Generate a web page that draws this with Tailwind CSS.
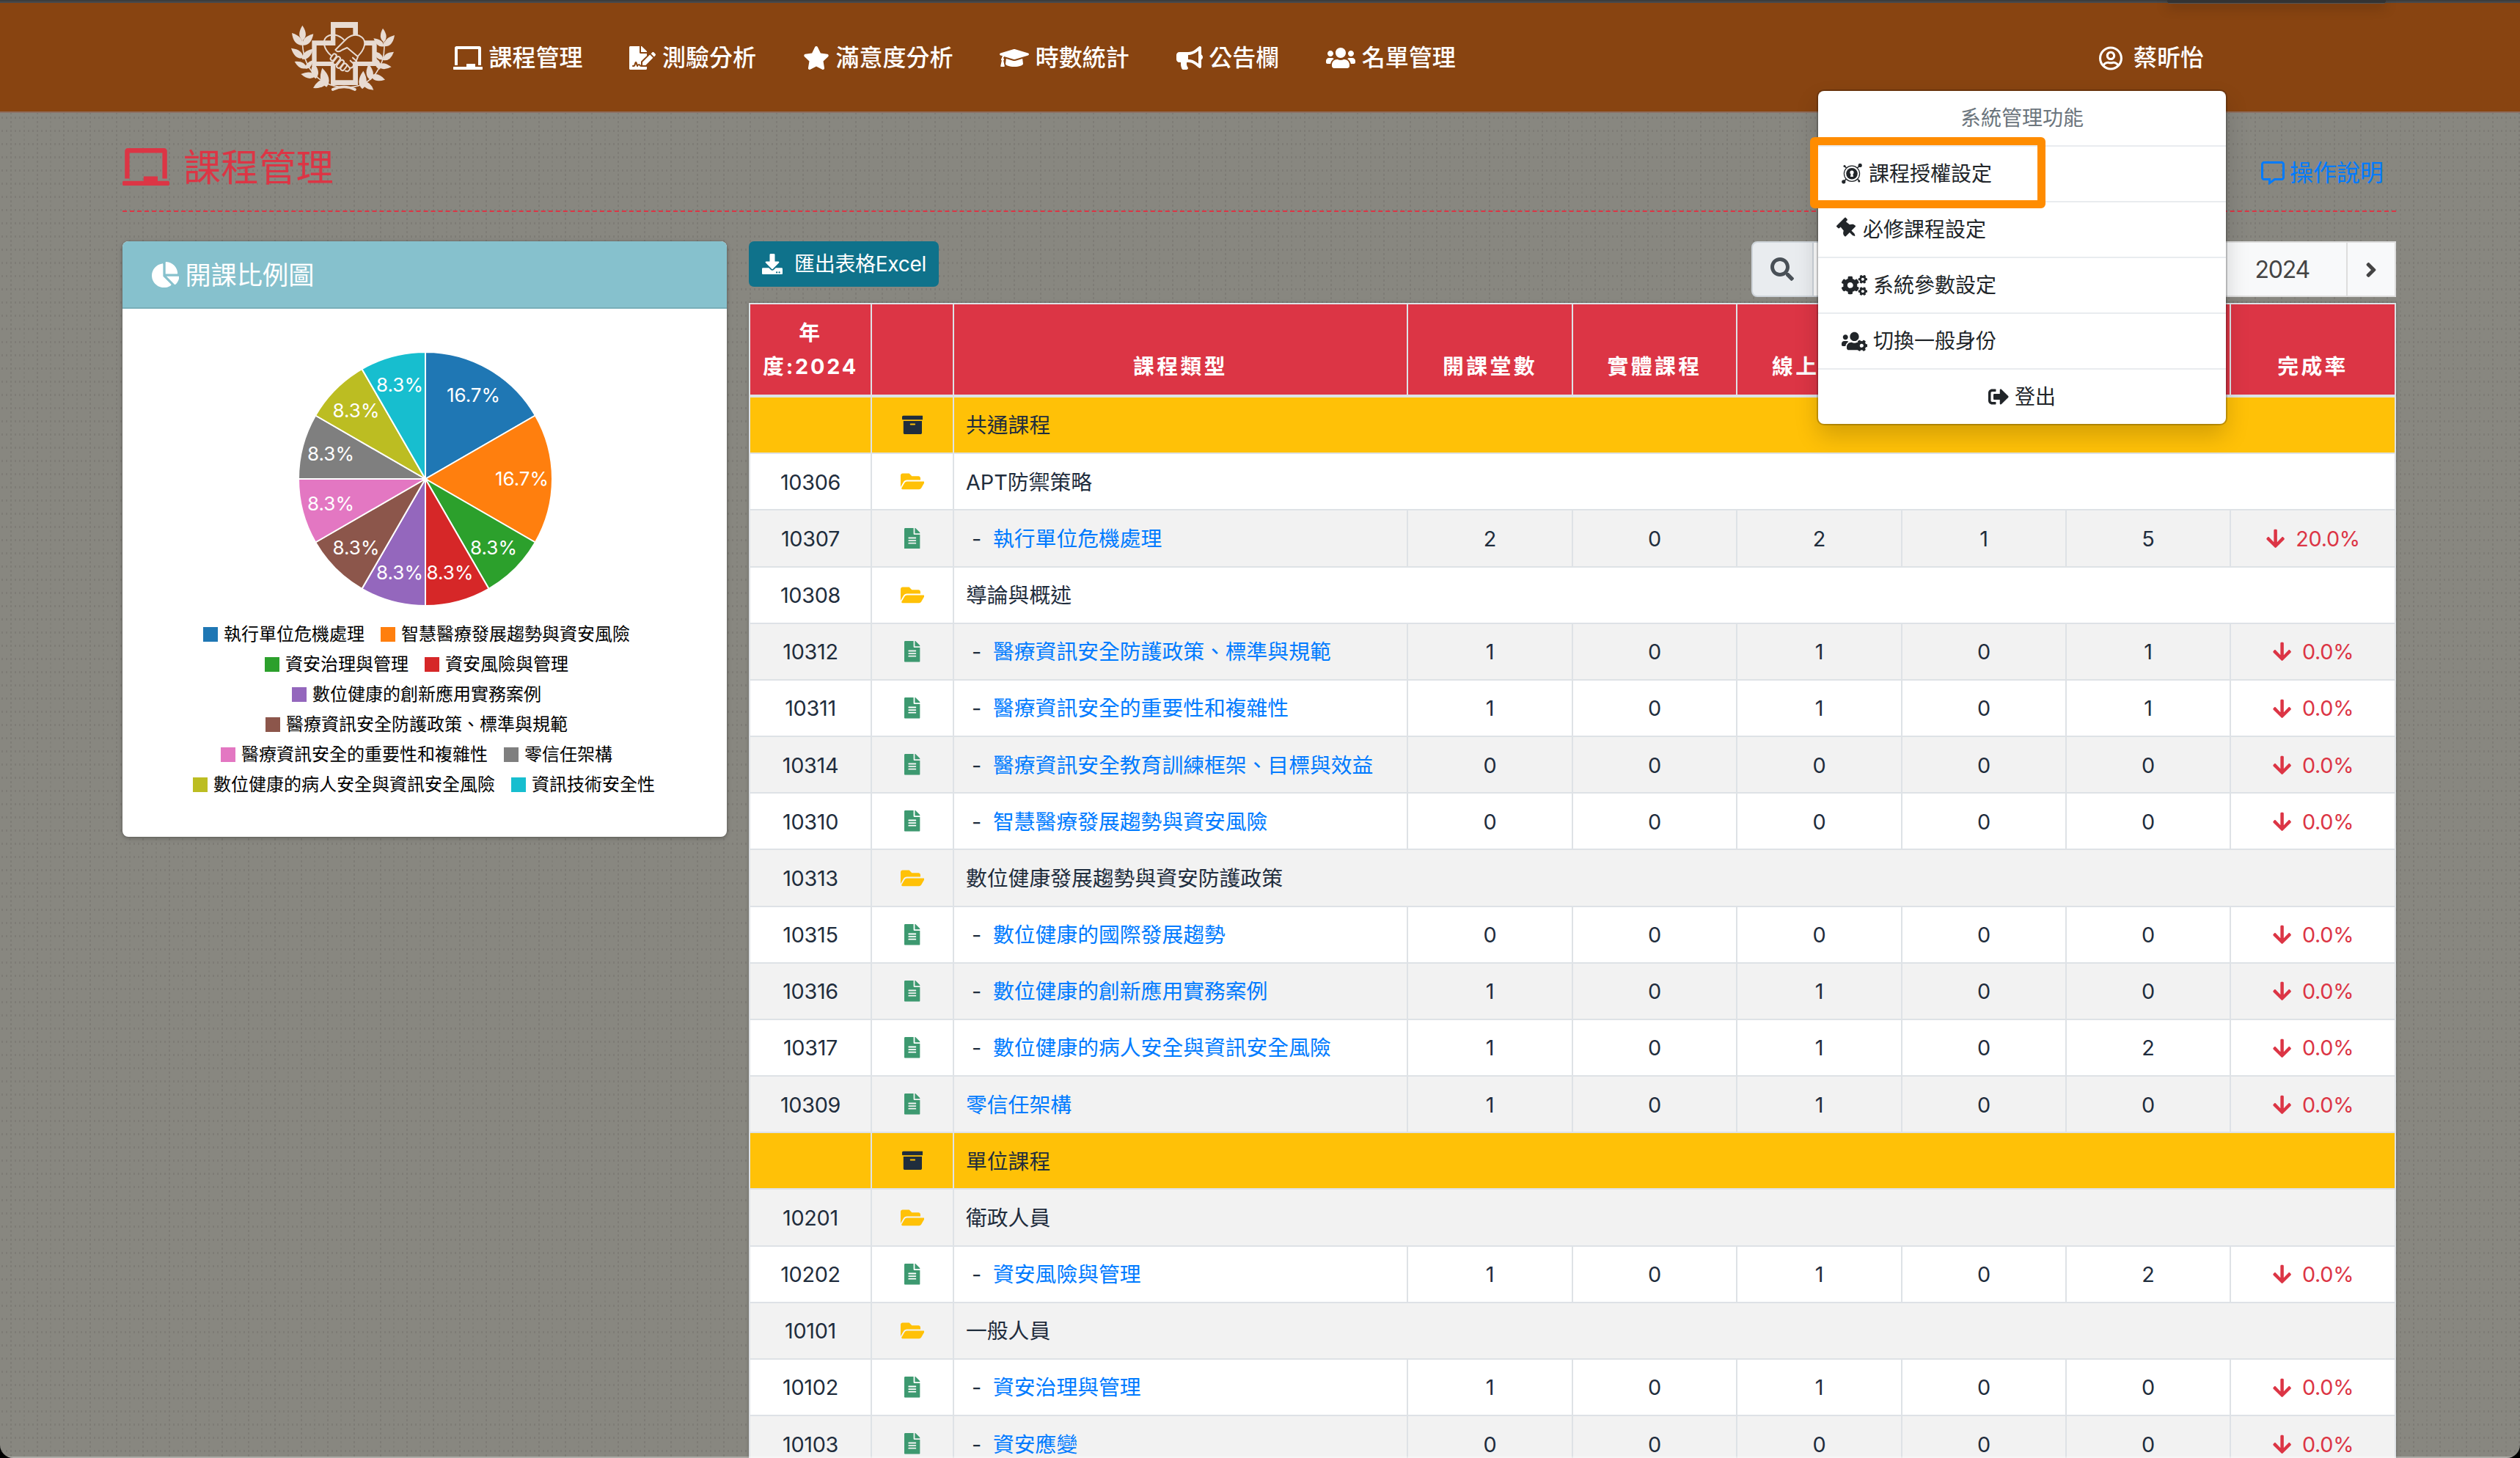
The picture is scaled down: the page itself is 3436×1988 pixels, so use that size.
<!DOCTYPE html>
<html lang="zh-Hant">
<head>
<meta charset="utf-8">
<title>課程管理</title>
<script src="https://cdn.jsdelivr.net/npm/@tailwindcss/browser@4"></script>
</head>
<body class="bg-black">
<svg class="hidden">
  <defs>
    <symbol id="chalkboard" viewBox="0 0 640 512"><path d="M96 64h448v352h64V40c0-22.06-17.94-40-40-40H72C49.94 0 32 17.94 32 40v376h64V64zm528 384H480v-64H288v64H16c-8.84 0-16 7.16-16 16v32c0 8.84 7.16 16 16 16h608c8.84 0 16-7.16 16-16v-32c0-8.84-7.16-16-16-16z"/></symbol>
    <symbol id="signature" viewBox="0 0 576 512"><path d="M218.17 424.14c-2.95-5.92-8.09-6.52-10.17-6.52s-7.22.59-10.02 6.19l-7.67 15.34c-6.37 12.78-25.03 11.37-29.48-2.09L144 386.59l-10.61 31.88c-5.89 17.66-22.38 29.53-41 29.53H80c-8.84 0-16-7.16-16-16s7.16-16 16-16h12.39c4.83 0 9.11-3.08 10.64-7.66l18.19-54.64c3.3-9.81 12.44-16.41 22.78-16.41s19.48 6.59 22.77 16.41l13.88 41.64c19.75-16.19 54.06-9.7 66 14.16 1.89 3.78 5.49 5.95 9.36 6.26v-82.12l128-127.09V160H248c-13.2 0-24-10.8-24-24V0H24C10.7 0 0 10.7 0 24v464c0 13.3 10.7 24 24 24h336c13.3 0 24-10.7 24-24v-40l-128-.11c-16.12-.31-30.58-9.28-37.83-23.75zM384 121.9c0-6.3-2.5-12.4-7-16.9L279.1 7c-4.5-4.5-10.6-7-17-7H256v128h128v-6.1zm-96 225.06V416h68.99l161.68-162.78-67.88-67.88L288 346.96zm280.54-179.63l-31.87-31.87c-9.94-9.94-26.07-9.94-36.01 0l-27.25 27.25 67.88 67.88 27.25-27.25c9.95-9.94 9.95-26.07 0-36.01z"/></symbol>
    <symbol id="star" viewBox="0 0 576 512"><path d="M259.3 17.8L194 150.2 47.9 171.5c-26.2 3.8-36.7 36.1-17.7 54.6l105.7 103-25 145.5c-4.5 26.3 23.2 46 46.4 33.7L288 439.6l130.7 68.7c23.2 12.2 50.9-7.4 46.4-33.7l-25-145.5 105.7-103c19-18.5 8.5-50.8-17.7-54.6L382 150.2 316.7 17.8c-11.7-23.6-45.6-23.9-57.4 0z"/></symbol>
    <symbol id="cap" viewBox="0 0 640 512"><path d="M622.34 153.2L343.4 67.5c-15.2-4.67-31.6-4.67-46.79 0L17.66 153.2c-23.54 7.23-23.54 38.36 0 45.59l48.63 14.94c-10.67 13.19-17.23 29.28-17.88 46.9C38.78 266.15 32 276.11 32 288c0 10.78 5.68 19.85 13.86 25.65L20.33 428.53C18.11 438.52 25.71 448 35.94 448h56.11c10.24 0 17.84-9.48 15.62-19.47L82.14 313.65C90.32 307.85 96 298.78 96 288c0-11.57-6.47-21.25-15.66-26.87.76-15.02 8.44-28.3 20.69-36.72L296.6 284.5c9.06 2.78 26.44 6.25 46.79 0l278.95-85.7c23.55-7.24 23.55-38.36 0-45.6zM352.79 315.09c-28.53 8.76-52.84 3.92-65.59 0l-145.02-44.55L128 384c0 35.35 85.96 64 192 64s192-28.65 192-64l-14.18-113.47-145.03 44.56z"/></symbol>
    <symbol id="bullhorn" viewBox="0 0 576 512"><path d="M576 240c0-23.63-12.95-44.04-32-55.12V32.01C544 23.26 537.02 0 512 0c-7.12 0-14.19 2.38-19.98 7.02l-85.03 68.03C364.28 109.19 310.66 128 256 128H64c-35.35 0-64 28.65-64 64v96c0 35.35 28.65 64 64 64h33.7c-1.39 10.48-2.18 21.14-2.18 32 0 39.77 9.26 77.35 25.56 110.94 5.19 10.69 16.52 17.06 28.4 17.06h74.28c26.05 0 41.69-29.84 25.9-50.56-16.4-21.52-26.15-48.36-26.15-77.44 0-11.11 1.62-21.79 4.41-32H256c54.66 0 108.28 18.81 150.98 52.95l85.03 68.03a32.023 32.023 0 0 0 19.98 7.02c24.92 0 32-22.78 32-32V295.13C563.05 284.04 576 263.63 576 240zm-96 141.42l-33.05-26.44C392.95 311.78 325.12 288 256 288v-96c69.12 0 136.95-23.78 190.95-66.98L480 98.58v282.84z"/></symbol>
    <symbol id="users" viewBox="0 0 640 512"><path d="M96 224c35.3 0 64-28.7 64-64s-28.7-64-64-64-64 28.7-64 64 28.7 64 64 64zm448 0c35.3 0 64-28.7 64-64s-28.7-64-64-64-64 28.7-64 64 28.7 64 64 64zm32 32h-64c-17.6 0-33.5 7.1-45.1 18.6 40.3 22.1 68.9 62 75.1 109.4h66c17.7 0 32-14.3 32-32v-32c0-35.3-28.7-64-64-64zm-256 0c61.9 0 112-50.1 112-112S381.9 32 320 32 208 82.1 208 144s50.1 112 112 112zm76.8 32h-8.3c-20.8 10-43.9 16-68.5 16s-47.6-6-68.5-16h-8.3C179.6 288 128 339.6 128 403.2V432c0 26.5 21.5 48 48 48h288c26.5 0 48-21.5 48-48v-28.8c0-63.6-51.6-115.2-115.2-115.2zm-223.7-13.4C161.5 263.1 145.6 256 128 256H64c-35.3 0-64 28.7-64 64v32c0 17.7 14.3 32 32 32h65.9c6.3-47.4 34.9-87.3 75.2-109.4z"/></symbol>
    <symbol id="usercircle" viewBox="0 0 496 512"><path d="M248 104c-53 0-96 43-96 96s43 96 96 96 96-43 96-96-43-96-96-96zm0 144c-26.5 0-48-21.5-48-48s21.5-48 48-48 48 21.5 48 48-21.5 48-48 48zm0-240C111 8 0 119 0 256s111 248 248 248 248-111 248-248S385 8 248 8zm0 448c-49.7 0-95.1-18.3-130.1-48.4 14.9-23 40.4-38.6 69.6-39.5 20.8 6.4 40.6 9.6 60.5 9.6s39.7-3.1 60.5-9.6c29.2 1 54.7 16.5 69.6 39.5-35 30.1-80.4 48.4-130.1 48.4zm162.7-84.1c-24.4-31.4-62.1-51.9-105.1-51.9-10.2 0-26 9.6-57.6 9.6-31.5 0-47.4-9.6-57.6-9.6-42.9 0-80.6 20.5-105.1 51.9C61.9 339.2 48 299.2 48 256c0-110.3 89.7-200 200-200s200 89.7 200 200c0 43.2-13.9 83.2-37.3 115.9z"/></symbol>
    <symbol id="comment" viewBox="0 0 512 512"><path d="M448 0H64C28.7 0 0 28.7 0 64v288c0 35.3 28.7 64 64 64h96v84c0 7.1 5.8 12 12 12 2.4 0 4.9-.7 7.1-2.4L304 416h144c35.3 0 64-28.7 64-64V64c0-35.3-28.7-64-64-64zm16 352c0 8.8-7.2 16-16 16H288l-12.8 9.6L208 428v-60H64c-8.8 0-16-7.2-16-16V64c0-8.8 7.2-16 16-16h384c8.8 0 16 7.2 16 16v288z"/></symbol>
    <symbol id="chartpie" viewBox="0 0 544 512"><path d="M527.79 288H290.5l158.03 158.03c6.04 6.04 15.98 6.53 22.19.68 38.7-36.46 65.32-85.61 73.13-140.86 1.34-9.46-6.51-17.85-16.06-17.85zm-15.83-64.8C503.72 103.74 408.26 8.28 288.8.04 279.68-.59 272 7.1 272 16.24V240h223.77c9.14 0 16.82-7.68 16.19-16.8zM224 288V50.71c0-9.55-8.39-17.4-17.84-16.06C86.99 51.49-4.1 155.6.14 280.37 4.5 408.51 114.83 513.59 243.03 511.98c50.4-.63 96.97-16.87 135.26-44.03 7.9-5.6 8.42-17.23 1.57-24.08L224 288z"/></symbol>
    <symbol id="download" viewBox="0 0 512 512"><path d="M216 0h80c13.3 0 24 10.7 24 24v168h87.7c17.8 0 26.7 21.5 14.1 34.1L269.7 378.3c-7.5 7.5-19.8 7.5-27.3 0L90.1 226.1c-12.6-12.6-3.7-34.1 14.1-34.1H192V24c0-13.3 10.7-24 24-24zm296 376v112c0 13.3-10.7 24-24 24H24c-13.3 0-24-10.7-24-24V376c0-13.3 10.7-24 24-24h146.7l49 49c20.1 20.1 52.5 20.1 72.6 0l49-49H488c13.3 0 24 10.7 24 24zm-124 88c0-11-9-20-20-20s-20 9-20 20 9 20 20 20 20-9 20-20zm64 0c0-11-9-20-20-20s-20 9-20 20 9 20 20 20 20-9 20-20z"/></symbol>
    <symbol id="search" viewBox="0 0 512 512"><path d="M505 442.7L405.3 343c-4.5-4.5-10.6-7-17-7H372c27.6-35.3 44-79.7 44-128C416 93.1 322.9 0 208 0S0 93.1 0 208s93.1 208 208 208c48.3 0 92.7-16.4 128-44v16.3c0 6.4 2.5 12.5 7 17l99.7 99.7c9.4 9.4 24.6 9.4 33.9 0l28.3-28.3c9.4-9.4 9.4-24.6.1-34zM208 336c-70.7 0-128-57.2-128-128 0-70.7 57.2-128 128-128 70.7 0 128 57.2 128 128 0 70.7-57.2 128-128 128z"/></symbol>
    <symbol id="archive" viewBox="0 0 512 512"><path d="M32 448c0 17.7 14.3 32 32 32h384c17.7 0 32-14.3 32-32V160H32v288zm160-212c0-6.6 5.4-12 12-12h104c6.6 0 12 5.4 12 12v8c0 6.6-5.4 12-12 12H204c-6.6 0-12-5.4-12-12v-8zM480 32H32C14.3 32 0 46.3 0 64v48c0 8.8 7.2 16 16 16h480c8.8 0 16-7.2 16-16V64c0-17.7-14.3-32-32-32z"/></symbol>
    <symbol id="folder" viewBox="0 0 576 512"><path d="M572.694 292.093L500.27 416.248A63.997 63.997 0 0 1 444.989 448H45.025c-18.523 0-30.064-20.093-20.731-36.093l72.424-124.155A64 64 0 0 1 152 256h399.964c18.523 0 30.064 20.093 20.73 36.093zM152 224h328v-48c0-26.51-21.49-48-48-48H272l-64-64H48C21.49 64 0 85.49 0 112v278.046l69.077-118.418C86.214 242.25 117.989 224 152 224z"/></symbol>
    <symbol id="file" viewBox="0 0 384 512"><path d="M224 136V0H24C10.7 0 0 10.7 0 24v464c0 13.3 10.7 24 24 24h336c13.3 0 24-10.7 24-24V160H248c-13.2 0-24-10.8-24-24zm64 236c0 6.6-5.4 12-12 12H108c-6.6 0-12-5.4-12-12v-8c0-6.6 5.4-12 12-12h168c6.6 0 12 5.4 12 12v8zm0-64c0 6.6-5.4 12-12 12H108c-6.6 0-12-5.4-12-12v-8c0-6.6 5.4-12 12-12h168c6.6 0 12 5.4 12 12v8zm0-72v8c0 6.6-5.4 12-12 12H108c-6.6 0-12-5.4-12-12v-8c0-6.6 5.4-12 12-12h168c6.6 0 12 5.4 12 12zm96-114.1v6.1H256V0h6.1c6.4 0 12.5 2.5 17 7l97.9 98c4.5 4.5 7 10.6 7 16.9z"/></symbol>
    <symbol id="down" viewBox="0 0 448 512"><path d="M413.1 222.5l22.2 22.2c9.4 9.4 9.4 24.6 0 33.9L241 473c-9.4 9.4-24.6 9.4-33.9 0L12.7 278.6c-9.4-9.4-9.4-24.6 0-33.9l22.2-22.2c9.5-9.5 25-9.3 34.3.4L184 343.4V56c0-13.3 10.7-24 24-24h32c13.3 0 24 10.7 24 24v287.4l114.8-120.5c9.3-9.8 24.8-10 34.3-.4z"/></symbol>
    <symbol id="right" viewBox="0 0 256 512"><path d="M224.3 273l-136 136c-9.4 9.4-24.6 9.4-33.9 0l-22.6-22.6c-9.4-9.4-9.4-24.6 0-33.9l96.4-96.4-96.4-96.4c-9.4-9.4-9.4-24.6 0-33.9L54.3 103c9.4-9.4 24.6-9.4 33.9 0l136 136c9.5 9.4 9.5 24.6.1 34z"/></symbol>
    <symbol id="signout" viewBox="0 0 512 512"><path d="M497 273L329 441c-15 15-41 4.5-41-17v-96H152c-13.3 0-24-10.7-24-24v-96c0-13.3 10.7-24 24-24h136V88c0-21.4 25.9-32 41-17l168 168c9.3 9.4 9.3 24.6 0 34zM192 436v-40c0-6.6-5.4-12-12-12H96c-17.7 0-32-14.3-32-32V160c0-17.7 14.3-32 32-32h84c6.6 0 12-5.4 12-12V76c0-6.6-5.4-12-12-12H96c-53 0-96 43-96 96v192c0 53 43 96 96 96h84c6.6 0 12-5.4 12-12z"/></symbol>
    <symbol id="pin" viewBox="0 0 384 512"><path d="M298.028 214.267L285.793 96H328c13.255 0 24-10.745 24-24V24c0-13.255-10.745-24-24-24H56C42.745 0 32 10.745 32 24v48c0 13.255 10.745 24 24 24h42.207L85.972 214.267C37.465 236.82 0 277.261 0 328c0 13.255 10.745 24 24 24h136v104.007c0 1.242.289 2.467.845 3.578l24 48c2.941 5.882 11.364 5.893 14.311 0l24-48a8.008 8.008 0 0 0 .845-3.578V352h136c13.255 0 24-10.745 24-24-.001-51.183-37.983-91.42-85.973-113.733z"/></symbol>
    <path id="smallcog" d="M512.1 191l-8.2 14.3c-3 5.3-9.4 7.5-15.1 5.4-11.8-4.4-22.6-10.7-32.1-18.6-4.6-3.8-5.8-10.5-2.8-15.7l8.2-14.3c-6.9-8-12.3-17.3-15.9-27.4h-16.5c-6 0-11.2-4.3-12.2-10.3-2-12-2.1-24.6 0-37.1 1-6 6.2-10.4 12.2-10.4h16.5c3.6-10.1 9-19.4 15.9-27.4l-8.2-14.3c-3-5.2-1.9-11.9 2.8-15.7 9.5-7.9 20.4-14.2 32.1-18.6 5.7-2.1 12.1.1 15.1 5.4l8.2 14.3c10.5-1.9 21.2-1.9 31.7 0L552 6.3c3-5.3 9.4-7.5 15.1-5.4 11.8 4.4 22.6 10.7 32.1 18.6 4.6 3.8 5.8 10.5 2.8 15.7l-8.2 14.3c6.9 8 12.3 17.3 15.9 27.4h16.5c6 0 11.2 4.3 12.2 10.3 2 12 2.1 24.6 0 37.1-1 6-6.2 10.4-12.2 10.4h-16.5c-3.6 10.1-9 19.4-15.9 27.4l8.2 14.3c3 5.2 1.9 11.9-2.8 15.7-9.5 7.9-20.4 14.2-32.1 18.6-5.7 2.1-12.1-.1-15.1-5.4l-8.2-14.3c-10.4 1.9-21.2 1.9-31.7 0zm-10.5-58.8c38.5 29.6 82.4-14.3 52.8-52.8-38.5-29.7-82.4 14.3-52.8 52.8z"/>
    <symbol id="cogs" viewBox="0 0 640 512"><use href="#smallcog"/><use href="#smallcog" y="299"/><path d="M386.3 286.1l33.7 16.8c10.1 5.8 14.5 18.1 10.5 29.1-8.9 24.2-26.4 46.4-42.6 65.8-7.4 8.9-20.2 11.1-30.3 5.3l-29.1-16.8c-16 13.7-34.6 24.6-54.9 31.7v33.6c0 11.6-8.3 21.6-19.7 23.6-24.6 4.2-50.4 4.4-75.9 0-11.5-2-20-11.9-20-23.6V418c-20.3-7.2-38.9-18-54.9-31.7L74 403c-10 5.8-22.9 3.6-30.3-5.3-16.2-19.4-33.3-41.6-42.2-65.7-4-10.9.4-23.2 10.5-29.1l33.3-16.8c-3.9-20.9-3.9-42.4 0-63.4L12 205.8c-10.1-5.8-14.6-18.1-10.5-29 8.9-24.2 26-46.4 42.2-65.8 7.4-8.9 20.2-11.1 30.3-5.3l29.1 16.8c16-13.7 34.6-24.6 54.9-31.7V57.1c0-11.5 8.2-21.5 19.6-23.5 24.6-4.2 50.5-4.4 76-.1 11.5 2 20 11.9 20 23.6v33.6c20.3 7.2 38.9 18 54.9 31.7l29.1-16.8c10-5.8 22.9-3.6 30.3 5.3 16.2 19.4 33.2 41.6 42.1 65.8 4 10.9.1 23.2-10 29.1l-33.7 16.8c3.9 21 3.9 42.5 0 63.5zm-117.6 21.1c59.2-77-28.7-164.9-105.7-105.7-59.2 77 28.7 164.9 105.7 105.7z"/></symbol>
    <mask id="cogcut" maskUnits="userSpaceOnUse" x="0" y="0" width="640" height="512"><rect width="640" height="512" fill="#fff"/><circle cx="496" cy="370" r="156" fill="#000"/></mask>
    <symbol id="userscog" viewBox="0 0 640 512"><g mask="url(#cogcut)"><path d="M96 224c35.3 0 64-28.7 64-64s-28.7-64-64-64-64 28.7-64 64 28.7 64 64 64zm224 32c61.9 0 112-50.1 112-112S381.900 32 320 32 208 82.100 208 144s50.100 112 112 112zm76.800 32h-8.300c-20.800 10-43.900 16-68.500 16s-47.600-6-68.500-16h-8.300C179.600 288 128 339.600 128 403.200V432c0 26.500 21.500 48 48 48h260v-192z"/><path d="M173.100 274.600C161.500 263.100 145.600 256 128 256H64c-35.300 0-64 28.700-64 64v32c0 17.700 14.300 32 32 32h65.900c6.300-47.400 34.900-87.300 75.200-109.400z"/></g><use href="#smallcog" transform="translate(500 370) scale(1.3) translate(-528 -105.5)"/></symbol>
    <symbol id="keyhub" viewBox="0 0 28 28"><path d="M4 3.500L24 23.500M25 2.500L3 24.500" stroke="currentColor" stroke-width="1.700"/><circle cx="14" cy="13.800" r="10.600" fill="#fff" stroke="currentColor" stroke-width="1.200"/><circle cx="14" cy="13.800" r="7.800"/><circle cx="25.200" cy="2.500" r="2.600"/><circle cx="2.800" cy="24.800" r="2.600"/><circle cx="4" cy="3.400" r="1.500"/><circle cx="23.800" cy="24" r="1.500"/><circle cx="14" cy="12" r="2.600" fill="#fff"/><path d="M13 12h2l1 6h-4z" fill="#fff"/></symbol>
  </defs>
</svg>

<div class="relative h-[1988px] w-[3436px] overflow-hidden rounded-b-[18px] bg-[#888780] font-['Inter','Noto_Sans_CJK_TC',sans-serif] text-[#1f2d3d]">
  <!-- woven page background -->
  <svg class="absolute inset-0 h-full w-full">
    <defs>
      <pattern id="weave" width="36" height="36" patternUnits="userSpaceOnUse" y="1">
        <g fill="#6f6e69" fill-opacity=".42">
          <path d="M2 14h2v3h-2zm6 0h2v3h-2zm6 0h2v3h-2zm6 0h2v3h-2zm6 0h2v3h-2zm6 0h2v3h-2z"/>
          <path d="M2 32h2v3h-2zm6 0h2v3h-2zm6 0h2v3h-2zm6 0h2v3h-2zm6 0h2v3h-2zm6 0h2v3h-2z"/>
          <path d="M14 2h2v3h-2zm0 6h2v3h-2zm0 12h2v3h-2zm0 6h2v3h-2z"/>
          <path fill-opacity=".25" d="M32 2h2v3h-2zm0 6h2v3h-2zm0 12h2v3h-2zm0 6h2v3h-2z"/>
        </g>
      </pattern>
    </defs>
    <rect width="100%" height="100%" fill="url(#weave)"/>
  </svg>

  <div class="relative">
    <div class="h-1 border-b-2 border-[#48494b] bg-[#3d3e3e]"></div>
    <header class="flex h-[150px] items-center border-b-2 border-[#8d7062] bg-[#884411] pt-[2px] pr-[431px] pl-[386px] text-[32px] leading-[48px] font-medium text-white">
      <svg id="logo" class="mt-[2px] h-[120px] w-[170px]" viewBox="0 0 510 360" fill="#e8dbd2">
        <path fill-rule="evenodd" d="M195 30H306V106H383V210H306V288H195V210H118V106H195ZM214 54V126H137V192H214V268H286V192H364V126H286V54Z"/>
        <g fill="none" stroke="#e8dbd2" stroke-width="5" stroke-linecap="round" stroke-linejoin="round">
          <path d="M79 95C76 200 130 292 250 297S424 200 412 105"/>
          <path d="M203 306Q250 285 294 306" stroke-width="11"/>
          <path d="M195 166C168 142 158 108 178 91S230 84 248 102" stroke-width="6"/>
          <path d="M306 170C336 140 342 108 322 92S274 84 256 102L214 144Q224 158 242 144L262 135L306 172L298 192" fill="#884411" stroke-width="6"/>
          <g fill="#884411" stroke-width="6">
            <rect x="-8" y="-15" width="16" height="30" rx="8" transform="translate(206 174) rotate(35)"/>
            <rect x="-8" y="-19" width="16" height="38" rx="8" transform="translate(219 188) rotate(38)"/>
            <rect x="-8" y="-19" width="16" height="38" rx="8" transform="translate(234 202) rotate(38)"/>
            <rect x="-8" y="-16" width="16" height="32" rx="8" transform="translate(248 214) rotate(38)"/>
          </g>
          <path d="M255 230Q268 236 274 220L262 205M274 218Q290 218 288 200L275 188M289 204Q302 202 300 190L285 176" stroke-width="6"/>
        </g>
      </svg>
      <nav class="ml-[62px] flex items-center gap-[63.800px]">
        <span class="flex items-center gap-[8.600px]"><svg class="h-8 w-10 fill-current"><use href="#chalkboard"/></svg>課程管理</span>
        <span class="flex items-center gap-[8.600px]"><svg class="h-8 w-9 fill-current"><use href="#signature"/></svg>測驗分析</span>
        <span class="flex items-center gap-[8.600px]"><svg class="h-8 w-9 fill-current"><use href="#star"/></svg>滿意度分析</span>
        <span class="flex items-center gap-[8.600px]"><svg class="h-8 w-10 fill-current"><use href="#cap"/></svg>時數統計</span>
        <span class="flex items-center gap-[8.600px]"><svg class="h-8 w-9 fill-current"><use href="#bullhorn"/></svg>公告欄</span>
        <span class="flex items-center gap-[8.600px]"><svg class="h-8 w-10 fill-current"><use href="#users"/></svg>名單管理</span>
      </nav>
      <span class="ml-auto flex items-center gap-[15px]"><svg class="h-[33px] w-8 fill-current"><use href="#usercircle"/></svg>蔡昕怡</span>
    </header>

    <main class="pr-[169px] pl-[167px]">
      <div class="flex h-[135px] items-center justify-between border-b-2 border-dashed border-[#dc3545] pr-[17px]">
        <h1 class="flex items-center gap-[19px] pt-[15px] text-[51.200px] leading-[60px] text-[#dc3545]"><svg class="h-[51.200px] w-16 fill-current"><use href="#chalkboard"/></svg>課程管理</h1>
        <a class="mt-[30px] flex items-center gap-[7px] text-[32px] leading-[48px] text-[#007bff]"><svg class="h-8 w-8 fill-current"><use href="#comment"/></svg>操作說明</a>
      </div>

      <div class="mt-10 flex items-start gap-[30px]">
        <section class="h-[812px] w-[824px] overflow-hidden rounded-lg bg-white shadow-[0_0_2px_rgba(0,0,0,.25),0_2px_6px_rgba(0,0,0,.25)]">
          <h2 class="flex h-[92px] items-center gap-2 border-b-2 border-[#78aeb9] bg-[#86c1cd] pt-[1px] pl-10 text-[35.200px] leading-[52px] text-white"><svg class="h-[35.200px] w-[37.400px] fill-current"><use href="#chartpie"/></svg>開課比例圖</h2>
          <svg id="pie" class="mt-[42px] ml-[213px] block h-[380px] w-[400px]" viewBox="-200 -190 400 380" stroke="#fff" stroke-width="2"></svg>
          <div id="legend" class="mt-[1px] w-[802px] text-[24px] leading-[41.100px] text-black"></div>
        </section>

        <section class="w-[2246px]">
          <div class="flex h-[84px] items-start justify-between">
            <button class="flex h-[62px] w-[259px] items-center gap-[16px] rounded-[7px] bg-[#0f728b] pl-[18px] text-[28px] text-white"><svg class="h-7 w-7 fill-current"><use href="#download"/></svg><span class="tracking-[-0.300px]">匯出表格Excel</span></button>
            <div class="flex h-[76px] w-[879px] text-[#444]">
              <div class="flex w-[85px] items-center rounded-l-lg border-2 border-[#ced4da] bg-[#e9ecef] pl-6"><svg class="h-8 w-8 fill-[#495057]"><use href="#search"/></svg></div>
              <div class="flex-1 border-y-2 border-[#ced4da] bg-white"></div>
              <div class="flex w-[240px] items-center justify-end border-y-2 border-[#ddd] bg-[#f8f9fa] pt-[1px] pr-[50px] text-[32px] tracking-[-1.200px]">2024</div>
              <div class="flex w-[68px] items-center justify-center border-2 border-[#ddd] bg-[#f8f9fa] pt-0.5"><svg class="h-8 w-4 fill-current"><use href="#right"/></svg></div>
            </div>
          </div>
          <div class="border-2 border-b-0 border-[#dee2e6] text-[28.800px] shadow-[0_0_4px_rgba(0,0,0,.25)]">
            <div id="head" class="flex h-[127px] border-b-4 border-[#dee2e6] bg-[#dc3545] text-center leading-[45.500px] font-bold tracking-[3.400px] text-white">
              <div class="flex w-[164px] items-end justify-center pb-4 tracking-[2.800px]"><span>年<br>度:2024</span></div>
            </div>
            <div id="rows"></div>
          </div>
        </section>
      </div>
    </main>
  </div>

  <!-- account menu -->
  <div class="absolute top-[124px] left-[2479px] w-[556px] divide-y-2 divide-[#e9ecef] rounded-lg bg-white text-[28px] leading-[42px] text-[#212529] shadow-[0_0_0_2px_rgba(0,0,0,.2),0_16px_32px_rgba(0,0,0,.175)]">
    <div class="flex h-[76px] items-center justify-center text-[#6c757d]">系統管理功能</div>
    <div class="flex h-[76px] items-center gap-[9px] pl-8"><svg class="h-7 w-7 fill-current"><use href="#keyhub"/></svg>課程授權設定</div>
    <div class="flex h-[76px] items-center gap-[10px] pl-[30px]"><svg class="mb-[2px] h-7 w-[21px] -rotate-45 fill-current"><use href="#pin"/></svg>必修課程設定</div>
    <div class="flex h-[76px] items-center gap-[8px] pl-8"><svg class="h-7 w-[35px] fill-current"><use href="#cogs"/></svg>系統參數設定</div>
    <div class="flex h-[76px] items-center gap-[8px] pl-8"><svg class="h-7 w-[35px] fill-current"><use href="#userscog"/></svg>切換一般身份</div>
    <div class="flex h-[74px] items-center justify-center gap-[8px]"><svg class="h-7 w-7 fill-current"><use href="#signout"/></svg>登出</div>
  </div>
  <div class="absolute top-[187px] left-[2468px] h-[97px] w-[321px] rounded-[6px] border-[11px] border-[#ff8c00]"></div>

  <!-- window edges -->
  <div class="absolute top-0 left-[2955px] h-[5px] w-[298px] rounded-b-[3px] border-b border-[#555] bg-[#333] shadow-[0_4px_16px_rgba(0,0,0,.35)]"></div>
  <div class="absolute bottom-0 left-0 h-0.5 w-full bg-white/30"></div>
</div>

<script>
const leaves = s => s.map(([bx, by, tx, ty]) => {
  const dx = tx - bx, dy = ty - by, w = .42, px = -dy * w, py = dx * w;
  const mx = bx + dx * .35, my = by + dy * .35;
  return `<path d="M${bx} ${by}Q${mx + px} ${my + py} ${tx} ${ty}Q${mx - px} ${my - py} ${bx} ${by}Z"/>`;
}).join('');
// laurel leaves: [base x, base y, tip x, tip y]
document.getElementById('logo').insertAdjacentHTML('beforeend', leaves([
  [80,106,79,44],[78,125,36,75],[80,125,124,79],[82,178,33,137],[78,182,122,140],[96,218,47,192],[92,222,122,186],
  [132,252,73,243],[134,262,124,196],[182,268,123,300],[178,296,160,218],
  [412,112,408,56],[412,130,370,97],[414,130,456,84],[408,184,371,150],[408,186,453,152],[386,208,443,214],[396,224,378,176],
  [358,250,417,266],[358,268,350,202],[326,276,370,308],[324,304,328,230]
]));

const cols = ['#1f77b4','#ff7f0e','#2ca02c','#d62728','#9467bd','#8c564b','#e377c2','#7f7f7f','#bcbd22','#17becf'];
const vals = [2,2,1,1,1,1,1,1,1,1];
const spots = [[65.5,-114],[131.5,0],[93,94],[33.5,128],[-35,128],[-94.5,94],[-129,34],[-129,-34],[-94.5,-93],[-35,-128.5]];
let a = 0, out = '';
vals.forEach((v, i) => {
  const b = a + v * Math.PI / 6, p = t => `${173 * Math.sin(t)} ${-173 * Math.cos(t)}`;
  out += `<path fill="${cols[i]}" d="M0 0L${p(a)}A173 173 0 0 1 ${p(b)}Z"/>`;
  a = b;
});
spots.forEach(([x, y], i) => out += `<text x="${x}" y="${y + 9}" fill="#fff" stroke="none" text-anchor="middle" font-size="26">${i < 2 ? '16.7%' : '8.3%'}</text>`);
document.getElementById('pie').innerHTML = out;

const legend = [[[0,'執行單位危機處理'],[1,'智慧醫療發展趨勢與資安風險']],[[2,'資安治理與管理'],[3,'資安風險與管理']],[[4,'數位健康的創新應用實務案例']],[[5,'醫療資訊安全防護政策、標準與規範']],[[6,'醫療資訊安全的重要性和複雜性'],[7,'零信任架構']],[[8,'數位健康的病人安全與資訊安全風險'],[9,'資訊技術安全性']]];
document.getElementById('legend').innerHTML = legend.map((r, i) =>
  `<div class="flex justify-center gap-[22px] ${i === 5 ? 'pl-5' : ''}">` + r.map(([c, t]) =>
    `<span class="flex items-center gap-2 whitespace-nowrap"><i class="h-5 w-5" style="background:${cols[c]}"></i>${t}</span>`).join('') + '</div>').join('');

const widths = ['w-[225px]','w-[224px]','w-[225px]','w-[224px]','w-[224px]','w-[225px]'];
const cell = 'flex items-center justify-center border-l-2 border-[#dee2e6]';
document.getElementById('head').insertAdjacentHTML('beforeend',
  '<div class="w-[112px] border-l-2 border-[#dee2e6]"></div><div class="flex w-[619px] items-end justify-center border-l-2 border-[#dee2e6] pb-4">課程類型</div>' +
  ['開課堂數','實體課程','線上課程','外部課程','參與人數','完成率'].map((t, i) => `<div class="${widths[i]} flex items-end justify-center border-l-2 border-[#dee2e6] pb-4">${t}</div>`).join(''));

const data = [
  ['', '共通課程'], ['10306', 'APT防禦策略'],
  ['10307', '執行單位危機處理', 2, 0, 2, 1, 5, '20.0%'], ['10308', '導論與概述'],
  ['10312', '醫療資訊安全防護政策、標準與規範', 1, 0, 1, 0, 1, '0.0%'],
  ['10311', '醫療資訊安全的重要性和複雜性', 1, 0, 1, 0, 1, '0.0%'],
  ['10314', '醫療資訊安全教育訓練框架、目標與效益', 0, 0, 0, 0, 0, '0.0%'],
  ['10310', '智慧醫療發展趨勢與資安風險', 0, 0, 0, 0, 0, '0.0%'],
  ['10313', '數位健康發展趨勢與資安防護政策'],
  ['10315', '數位健康的國際發展趨勢', 0, 0, 0, 0, 0, '0.0%'],
  ['10316', '數位健康的創新應用實務案例', 1, 0, 1, 0, 0, '0.0%'],
  ['10317', '數位健康的病人安全與資訊安全風險', 1, 0, 1, 0, 2, '0.0%'],
  ['10309', '零信任架構', 1, 0, 1, 0, 0, '0.0%'],
  ['', '單位課程'], ['10201', '衛政人員'],
  ['10202', '資安風險與管理', 1, 0, 1, 0, 2, '0.0%'], ['10101', '一般人員'],
  ['10102', '資安治理與管理', 1, 0, 1, 0, 0, '0.0%'],
  ['10103', '資安應變', 0, 0, 0, 0, 0, '0.0%']
];
document.getElementById('rows').innerHTML = data.map((r, i) => {
  const course = r.length > 2, bg = !r[0] ? 'bg-[#ffc107]' : i % 2 ? 'bg-white' : 'bg-[#f2f2f2]';
  const icon = !r[0] ? '<svg class="h-[28.800px] w-[28.800px] fill-[#1f2d3d]"><use href="#archive"/></svg>'
    : course ? '<svg class="h-[28.800px] w-[21.600px] fill-[#3d9970]"><use href="#file"/></svg>'
    : '<svg class="h-[28.800px] w-[32.400px] fill-[#ffc107]"><use href="#folder"/></svg>';
  const top = r[0] === '10309';
  const name = !course ? r[1] : top ? `<a class="text-[#007bff]">${r[1]}</a>` : `<span class="w-[37px] pl-2">-</span><a class="text-[#007bff]">${r[1]}</a>`;
  return `<div class="flex h-[77.180px] border-b-2 border-[#dee2e6] pt-[1px] ${bg} -mt-0">
    <div class="flex w-[164px] items-center justify-center tracking-[-0.300px]">${r[0]}</div>
    <div class="-mt-[1px] w-[112px] ${cell}">${icon}</div>
    <div class="-mt-[1px] flex ${course ? 'w-[619px]' : 'flex-1'} items-center border-l-2 border-[#dee2e6] pt-[1px] pl-4">${name}</div>` +
    (course ? r.slice(2).map((v, k) => k < 5 ? `<div class="-mt-[1px] pt-[1px] ${widths[k]} ${cell}">${v}</div>`
      : `<div class="-mt-[1px] pt-[1px] ${widths[k]} ${cell} gap-[15px] pl-[1px] text-[#dc3545]"><svg class="h-[28.800px] w-[25.200px] fill-current"><use href="#down"/></svg><span class="tracking-[-0.300px]">${v}</span></div>`).join('') : '') + '</div>';
}).join('');
</script>
</body>
</html>
